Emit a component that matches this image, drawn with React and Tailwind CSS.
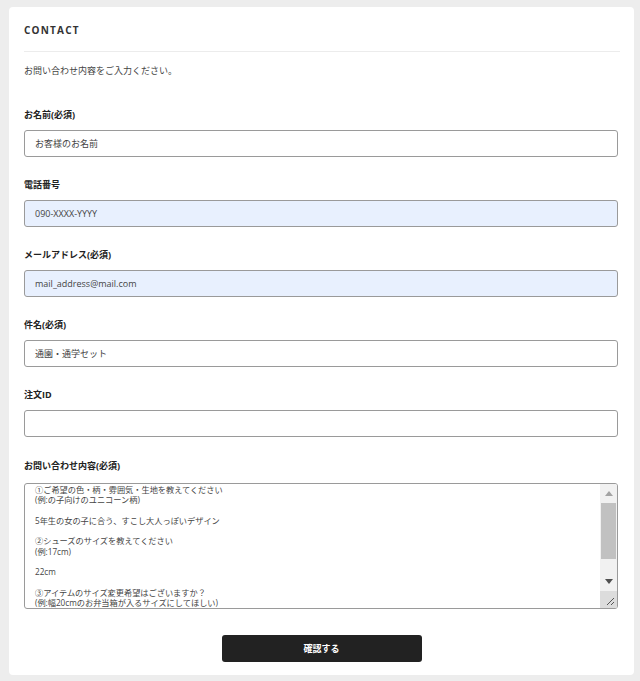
import React from 'react';

const font = { fontFamily: '"Open Sans", "Noto Sans CJK JP", sans-serif' };

const fields = [
    { label: 'お名前(必須)', value: 'お客様のお名前', fill: false },
    { label: '電話番号', value: '090-XXXX-YYYY', fill: true },
    { label: 'メールアドレス(必須)', value: 'mail_address@mail.com', fill: true },
    { label: '件名(必須)', value: '通園・通学セット', fill: false },
    { label: '注文ID', value: '', fill: false },
];

const message = `①ご希望の色・柄・雰囲気・生地を教えてください
(例:の子向けのユニコーン柄)

5年生の女の子に合う、すこし大人っぽいデザイン

②シューズのサイズを教えてください
(例:17cm)

22cm

③アイテムのサイズ変更希望はございますか？
(例:幅20cmのお弁当箱が入るサイズにしてほしい)

特になし`;

const Label = ({ children }) => (
    <label className="text-[9px] font-bold text-[#222] leading-none h-[15px] flex items-center">{children}</label>
);

const Field = ({ label, value, fill }) => (
    <div className="flex flex-col">
        <Label>{label}</Label>
        <div className={`mt-[8px] h-[27px] rounded-[3px] border border-[#9a9a9a] flex items-center px-[10px] text-[9px] text-[#444] ${fill ? 'bg-[#e8f0fe]' : 'bg-white'}`}>
            {value}
        </div>
    </div>
);

export default function App() {
    return (
        <div className="w-[640px] h-[681px] bg-[#ededed] pt-[7px] pl-[9px] overflow-hidden" style={font}>
            <div className="w-[625px] h-[668px] bg-white rounded-[4px] px-[15px] flex flex-col">
                <h1 className="text-[10px] font-bold tracking-[0.12em] text-[#333] mt-[17px] leading-[12px]">CONTACT</h1>
                <div className="mt-[15px] h-px bg-[#ececec] w-[596px]" />
                <p className="mt-[13px] text-[9px] text-[#444] leading-[12px]">お問い合わせ内容をご入力ください。</p>

                <div className="mt-[30px] w-[594px] flex flex-col gap-[20px]">
                    {fields.map(f => <Field key={f.label} {...f} />)}
                </div>

                <div className="mt-[21px] w-[594px] flex flex-col">
                    <Label>お問い合わせ内容(必須)</Label>
                    <div className="mt-[10px] h-[126px] w-full rounded-[3px] border border-[#9a9a9a] flex overflow-hidden">
                        <textarea
                            readOnly
                            value={message}
                            className="flex-1 h-full pl-[10px] pr-[4px] pt-[1px] text-[8.2px] leading-[10.3px] text-[#444] resize-none outline-none overflow-hidden [scrollbar-width:none]"
                            style={font}
                        />
                        <div className="w-[17px] h-full bg-[#f1f1f1] flex flex-col">
                            <div className="h-[19px] flex items-center justify-center">
                                <svg width="8" height="5" viewBox="0 0 8 5"><path d="M0 5 L4 0 L8 5 Z" fill="#a3a3a3" /></svg>
                            </div>
                            <div className="h-[56px] mx-[1px] bg-[#c1c1c1]" />
                            <div className="flex-1" />
                            <div className="h-[19px] flex items-center justify-center">
                                <svg width="8" height="5" viewBox="0 0 8 5"><path d="M0 0 L8 0 L4 5 Z" fill="#505050" /></svg>
                            </div>
                            <div className="h-[17px] bg-[#dcdcdc] flex items-end justify-end p-[2px]">
                                <svg width="10" height="10" viewBox="0 0 10 10"><path d="M9 2 L2 9 M9 6 L6 9" stroke="#555" strokeWidth="1" /></svg>
                            </div>
                        </div>
                    </div>
                </div>

                <div className="mt-[26px] flex justify-center">
                    <button className="w-[200px] h-[27px] bg-[#222222] rounded-[3px] text-white text-[9px] font-bold">確認する</button>
                </div>
            </div>
        </div>
    );
}
